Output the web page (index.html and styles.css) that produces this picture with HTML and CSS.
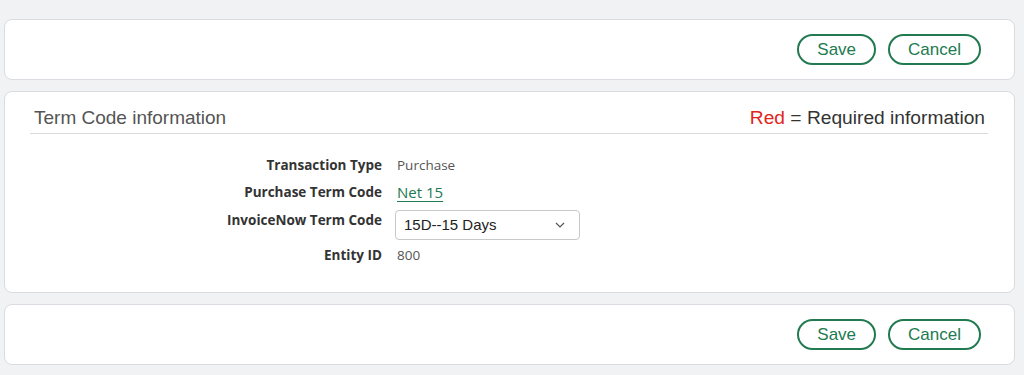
FILE: index.html
```html
<!DOCTYPE html>
<html lang="en">
<head>
<meta charset="utf-8">
<title>Term Code information</title>
<link rel="stylesheet" href="styles.css">
</head>
<body>
<div class="page">
  <div class="card actions">
    <button class="btn">Save</button>
    <button class="btn">Cancel</button>
  </div>

  <div class="card info">
    <div class="info-head">
      <h2 class="info-title">Term Code information</h2>
      <div class="legend"><span class="req">Red</span> = Required information</div>
    </div>
    <div class="form">
      <div class="lbl">Transaction Type</div>
      <div class="val">Purchase</div>

      <div class="lbl">Purchase Term Code</div>
      <div class="val"><a class="link" href="#">Net 15</a></div>

      <div class="lbl">InvoiceNow Term Code</div>
      <div class="val">
        <div class="select">
          <span>15D--15 Days</span>
          <svg class="chev" width="10" height="6" viewBox="0 0 10 6"><path d="M1 1l4 4 4-4" fill="none" stroke="#555" stroke-width="1.2"/></svg>
        </div>
      </div>

      <div class="lbl">Entity ID</div>
      <div class="val">800</div>
    </div>
  </div>

  <div class="card actions">
    <button class="btn">Save</button>
    <button class="btn">Cancel</button>
  </div>
</div>
</body>
</html>
```

FILE: styles.css
```css
html, body {
  margin: 0;
  padding: 0;
  background: #f0f2f4;
}
body {
  font-family: "Liberation Sans", Arial, sans-serif;
}
.page {
  padding: 19px 9px 0 4px;
  display: flex;
  flex-direction: column;
  gap: 11px;
}
.card {
  background: #fff;
  border: 1px solid #d9dde1;
  border-radius: 8px;
}
.actions {
  height: 59px;
  display: flex;
  justify-content: flex-end;
  align-items: center;
  gap: 12px;
  padding-right: 33px;
}
.btn {
  font-family: "Liberation Sans", Arial, sans-serif;
  font-size: 17px;
  color: #217a50;
  background: #fff;
  border: 2px solid #217a50;
  border-radius: 16px;
  height: 31px;
  padding: 0 18px;
  cursor: pointer;
}
.info {
  height: 200px;
  padding: 0 26px 0 25px;
}
.info-head {
  display: flex;
  justify-content: space-between;
  align-items: flex-end;
  border-bottom: 1px solid #d6dadd;
  margin-top: 15px;
  padding: 0 3px 4px 4px;
}
.info-title {
  margin: 0;
  font-size: 19px;
  font-weight: normal;
  color: #555;
  line-height: 22px;
}
.legend {
  font-size: 19.2px;
  color: #333;
  line-height: 22px;
}
.req {
  color: #e0261c;
}
.form {
  display: grid;
  grid-template-columns: 352px auto;
  column-gap: 15px;
  row-gap: 7px;
  margin-top: 21px;
  align-items: start;
}
.lbl {
  font-family: "Open Sans", sans-serif;
  font-weight: 700;
  font-size: 13.5px;
  color: #333;
  text-align: right;
  line-height: 20px;
}
.val {
  font-family: "Open Sans", sans-serif;
  font-size: 13.5px;
  color: #555;
  line-height: 20px;
}
.link {
  font-size: 15px;
  color: #217a50;
  text-decoration: underline;
  text-underline-offset: 3px;
}
.select {
  margin: 0 0 -2px -2px;
  height: 28px;
  border: 1px solid #c6c9cc;
  border-radius: 4px;
  display: flex;
  align-items: center;
  justify-content: space-between;
  padding: 0 14px 0 8px;
  box-sizing: content-box;
  width: 161px;
  font-family: "Liberation Sans", Arial, sans-serif;
  font-size: 15px;
  color: #222;
}
.chev {
  display: block;
}
```
